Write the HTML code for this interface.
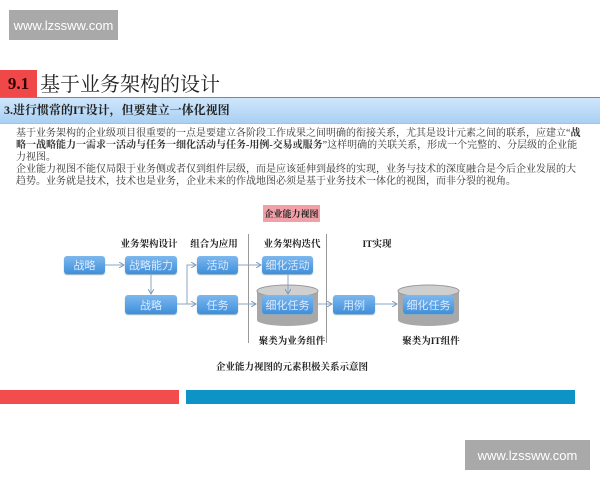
<!DOCTYPE html>
<html><head><meta charset="utf-8"><style>
body{margin:0;width:600px;height:480px;background:#fff;position:relative;overflow:hidden;font-family:"Liberation Serif","Noto Serif CJK SC",serif;color:#222}
.a{position:absolute}
.wm{background:#a9a9a9;color:#fff;font-family:"Liberation Sans",sans-serif;font-size:13px;display:flex;align-items:center;justify-content:center}
.bx{position:absolute;background:linear-gradient(#7db8ee,#3f8fdc);border-radius:3px;color:#dbeaff;font-size:11px;display:flex;align-items:center;justify-content:center;font-family:"Noto Sans CJK SC",sans-serif;box-shadow:0 1px 1px #8ab;white-space:nowrap}
.lb{position:absolute;font-size:9.5px;font-weight:bold;transform:translateX(-50%);white-space:nowrap}
</style></head><body>
<div class="a wm" style="left:9px;top:10px;width:109px;height:30px">www.lzssww.com</div>
<div class="a wm" style="left:465px;top:440px;width:125px;height:30px">www.lzssww.com</div>
<div class="a" style="left:0;top:70px;width:37px;height:27px;background:#f04848;font-weight:bold;font-size:17px;color:#300;display:flex;align-items:center;justify-content:center">9.1</div>
<div class="a" style="left:40px;top:70px;font-size:20px;line-height:26px;font-family:'Noto Serif CJK SC',serif;color:#222">基于业务架构的设计</div>
<div class="a" style="left:0;top:97px;width:600px;height:25px;background:linear-gradient(#cfe6fb,#a9d0f3);border-top:1px solid #5b8fbf;border-bottom:1px solid #9cc;"></div>
<div class="a" style="left:4px;top:101px;font-size:12px;font-weight:bold;line-height:18px">3.进行惯常的IT设计，但要建立一体化视图</div>
<div class="a" style="left:16px;top:128px;width:566px;font-size:10px;line-height:12px;color:#333">基于业务架构的企业级项目很重要的一点是要建立各阶段工作成果之间明确的衔接关系，尤其是设计元素之间的联系，应建立“<b>战略一战略能力一需求一活动与任务一细化活动与任务-用例-交易或服务</b>”这样明确的关联关系，形成一个完整的、分层级的企业能力视图。<br>企业能力视图不能仅局限于业务侧或者仅到组件层级，而是应该延伸到最终的实现，业务与技术的深度融合是今后企业发展的大趋势。业务就是技术，技术也是业务，企业未来的作战地图必须是基于业务技术一体化的视图，而非分裂的视角。</div>
<div class="a" style="left:263px;top:205px;width:57px;height:17px;background:#f2a0a8;font-size:9px;font-weight:bold;display:flex;align-items:center;justify-content:center;white-space:nowrap">企业能力视图</div>
<div class="lb" style="left:149px;top:236px">业务架构设计</div>
<div class="lb" style="left:214px;top:236px">组合为应用</div>
<div class="lb" style="left:292px;top:236px">业务架构迭代</div>
<div class="lb" style="left:377px;top:236px">IT实现</div>
<svg class="a" style="left:0;top:0" width="600" height="480">
<defs><marker id="m" markerWidth="6" markerHeight="6" refX="5" refY="3" orient="auto"><path d="M0,0 L5,3 L0,6" fill="none" stroke="#7a9cc0"/></marker></defs>
<g stroke="#999" stroke-width="1"><line x1="248.5" y1="234" x2="248.5" y2="343"/><line x1="326.5" y1="234" x2="326.5" y2="343"/></g>
<g><path d="M257,291 V320 A30.5,6 0 0 0 318,320 V291" fill="#a8a8a8"/><ellipse cx="287.5" cy="291" rx="30.5" ry="6" fill="#cfcfcf" stroke="#999"/>
<path d="M398,291 V320 A30.5,6 0 0 0 459,320 V291" fill="#a8a8a8"/><ellipse cx="428.5" cy="291" rx="30.5" ry="6" fill="#cfcfcf" stroke="#999"/></g>
<g stroke="#8aa6c4" fill="none" marker-end="url(#m)">
<line x1="105" y1="265" x2="124" y2="265"/>
<line x1="151" y1="274" x2="151" y2="294"/>
<path d="M177,304 H187 V265 H196"/>
<line x1="187" y1="304" x2="196" y2="304"/>
<line x1="238" y1="265" x2="261" y2="265"/>
<line x1="238" y1="304" x2="256" y2="304"/>
<line x1="288" y1="274" x2="288" y2="294"/>
<line x1="318" y1="304" x2="332" y2="304"/>
<line x1="375" y1="304" x2="397" y2="304"/>
</g>
</svg>
<div class="bx" style="left:64px;top:256px;width:41px;height:18px">战略</div>
<div class="bx" style="left:125px;top:256px;width:52px;height:18px">战略能力</div>
<div class="bx" style="left:125px;top:295px;width:52px;height:19px">战略</div>
<div class="bx" style="left:197px;top:256px;width:41px;height:18px">活动</div>
<div class="bx" style="left:197px;top:295px;width:41px;height:19px">任务</div>
<div class="bx" style="left:262px;top:256px;width:51px;height:18px">细化活动</div>
<div class="bx" style="left:262px;top:295px;width:51px;height:19px">细化任务</div>
<div class="bx" style="left:333px;top:295px;width:42px;height:19px">用例</div>
<div class="bx" style="left:403px;top:295px;width:51px;height:19px">细化任务</div>
<div class="lb" style="left:292px;top:333px">聚类为业务组件</div>
<div class="lb" style="left:431px;top:333px">聚类为IT组件</div>
<div class="lb" style="left:292px;top:359px">企业能力视图的元素积极关系示意图</div>
<div class="a" style="left:0;top:390px;width:179px;height:14px;background:#f24c4c"></div>
<div class="a" style="left:186px;top:390px;width:389px;height:14px;background:#0e93c6"></div>
</body></html>
